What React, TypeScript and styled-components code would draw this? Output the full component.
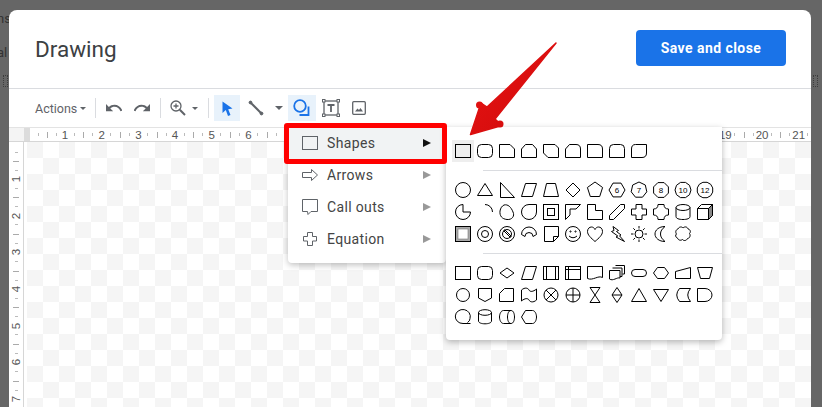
import React from "react";
import styled, { createGlobalStyle } from "styled-components";

const Global = createGlobalStyle`
  html, body { margin: 0; padding: 0; height: 407px; overflow: hidden; background: #666; }
  #root { height: 407px; }
  * { box-sizing: border-box; }
`;

const Page = styled.div`
  position: relative;
  width: 822px;
  height: 407px;
  overflow: hidden;
  background: #666;
  padding: 10px 11px 0 9px;
  font-family: Roboto, "Liberation Sans", sans-serif;
`;
const BehindText = styled.span<{ $top: number }>`
  position: absolute;
  left: -3px;
  top: ${(p) => p.$top}px;
  font-size: 13px;
  color: #333;
`;
const BehindDots = styled.span<{ $left: number }>`
  position: absolute;
  left: ${(p) => p.$left}px;
  top: 75px;
  width: 5px;
  height: 12px;
  border: 1px dotted #3d3d3d;
`;
const Dialog = styled.div`
  position: relative;
  height: 410px;
  background: #fff;
  border-radius: 8px 8px 0 0;
  overflow: hidden;
  display: flex;
  flex-direction: column;
`;
const Header = styled.header`
  height: 79px;
  flex: none;
  display: flex;
  align-items: center;
  justify-content: space-between;
  padding: 0 25px 2px 26px;
  border-bottom: 1px solid #dadce0;
`;
const Title = styled.h1`
  margin: 2px 0 0;
  font: 400 22.5px Roboto, sans-serif;
  color: #3c4043;
`;
const SaveButton = styled.button`
  width: 150px;
  height: 36px;
  border: 0;
  border-radius: 4px;
  background: #1a73e8;
  color: #fff;
  font: 700 14px Roboto, sans-serif;
  letter-spacing: 0.45px;
`;
const Toolbar = styled.div`
  height: 38px;
  flex: none;
  display: flex;
  align-items: center;
  padding-left: 26px;
`;
const ActionsLabel = styled.span`
  font-size: 12.5px;
  width: 41px;
  color: #5f6368;
  white-space: nowrap;
`;
const Divider = styled.span<{ $ml: number }>`
  width: 1px;
  height: 20px;
  flex: none;
  margin-left: ${(p) => p.$ml}px;
  background: #dadce0;
`;
const Slot = styled.span<{ $w: number; $ml?: number; $on?: boolean }>`
  width: ${(p) => p.$w}px;
  height: 26px;
  flex: none;
  margin-left: ${(p) => p.$ml ?? 0}px;
  display: flex;
  align-items: center;
  justify-content: center;
  background: ${(p) => (p.$on ? "#e8f2fb" : "transparent")};
`;
const Caret = styled.span<{ $ml?: number; $size?: number }>`
  flex: none;
  width: 0;
  height: 0;
  margin-left: ${(p) => p.$ml ?? 0}px;
  border-style: solid;
  border-color: #5f6368 transparent transparent;
  border-width: ${(p) => p.$size ?? 3}px ${(p) => p.$size ?? 3}px 0;
`;

const TopRuler = styled.div`
  height: 15px;
  flex: none;
  display: flex;
  overflow: hidden;
  border-top: 1px solid #e3e3e3;
  border-bottom: 1px solid #d6d6d6;
  background: #fff;
`;
const RulerCorner = styled.div`
  width: 21px;
  flex: none;
  background: linear-gradient(90deg, #f4f4f4 0 15px, #dcdcdc 15px);
`;
const InchCell = styled.span<{ $w?: number }>`
  flex: none;
  width: ${(p) => p.$w ?? 36.7}px;
  display: flex;
  align-items: center;
  justify-content: center;
  font: 11.5px "Liberation Sans", sans-serif;
  color: #555;
  background:
    linear-gradient(#aaa, #aaa) 0 center / 1px 6px no-repeat,
    linear-gradient(#bbb, #bbb) 9px center / 1px 3px no-repeat,
    linear-gradient(#bbb, #bbb) 27px center / 1px 3px no-repeat;
`;
const FirstCell = styled.span`
  flex: none;
  width: 16.65px;
  background: linear-gradient(#bbb, #bbb) 8px center / 1px 3px no-repeat;
`;
const WorkArea = styled.div`
  flex: 1;
  min-height: 0;
  display: flex;
`;
const LeftRuler = styled.div`
  width: 15px;
  flex: none;
  border-right: 1px solid #d6d6d6;
  display: flex;
  flex-direction: column;
  overflow: hidden;
`;
const VFirstCell = styled.span`
  flex: none;
  height: 18.65px;
  background: linear-gradient(#bbb, #bbb) center 10px / 3px 1px no-repeat;
`;
const VInchCell = styled.span`
  flex: none;
  height: 36.7px;
  display: flex;
  align-items: center;
  justify-content: center;
  font: 11.5px "Liberation Sans", sans-serif;
  color: #555;
  background:
    linear-gradient(#aaa, #aaa) center 0 / 6px 1px no-repeat,
    linear-gradient(#bbb, #bbb) center 9px / 3px 1px no-repeat,
    linear-gradient(#bbb, #bbb) center 27px / 3px 1px no-repeat;
`;
const VDigit = styled.span`
  display: block;
  transform: rotate(-90deg);
`;
const Canvas = styled.div`
  flex: 1;
  padding-left: 3px;
  background-image: conic-gradient(#fff 25%, #f5f5f5 0 50%, #fff 0 75%, #f5f5f5 0);
  background-size: 32px 32px;
  background-clip: content-box;
  background-origin: content-box;
`;

const Menu = styled.div`
  position: absolute;
  left: 279px;
  top: 117px;
  width: 158px;
  height: 136px;
  background: #fff;
  box-shadow: 0 2px 6px rgba(0, 0, 0, 0.25);
  border-radius: 0 0 4px 4px;
  z-index: 2;
`;
const MenuItem = styled.div<{ $active?: boolean }>`
  height: 32px;
  display: flex;
  align-items: center;
  padding: 0 15px 0 14px;
  gap: 9px;
  font-size: 14px;
  letter-spacing: 0.35px;
  color: #444;
  background: ${(p) => (p.$active ? "#f1f3f4" : "transparent")};
`;
const MenuLabel = styled.span`
  flex: 1;
`;
const SubArrow = styled.span<{ $active?: boolean }>`
  width: 0;
  height: 0;
  border-style: solid;
  border-width: 4px 0 4px 8px;
  border-color: transparent transparent transparent ${(p) => (p.$active ? "#111" : "#999")};
`;
const Highlight = styled.div`
  position: absolute;
  left: 275px;
  top: 113px;
  width: 163px;
  height: 41px;
  border: 5px solid #f00;
  border-radius: 3px;
  z-index: 3;
`;
const SubMenu = styled.div`
  position: absolute;
  left: 437px;
  top: 117px;
  width: 276px;
  height: 213px;
  padding: 13px 0 0 6px;
  background: #fff;
  box-shadow: 0 2px 6px rgba(0, 0, 0, 0.28);
  border-radius: 0 0 4px 4px;
  z-index: 2;
`;
const ShapeGrid = styled.div`
  display: grid;
  grid-template-columns: repeat(12, 22px);
  grid-auto-rows: 22px;
`;
const ShapeCell = styled.span<{ $on?: boolean }>`
  display: block;
  width: 22px;
  height: 22px;
  background: ${(p) => (p.$on ? "#eeeeee" : "transparent")};
`;
const ShapeRule = styled.hr`
  height: 1px;
  border: 0;
  margin: 8px 0 8px 31px;
  background: #dadce0;
`;
const CalloutArrow = styled.svg`
  position: absolute;
  left: 460px;
  top: 35px;
  z-index: 4;
`;

const poly = (n: number, r = 8, rot = 0, cx = 11, cy = 11) =>
  Array.from({ length: n }, (_, i) => {
    const a = rot + (i * 2 * Math.PI) / n;
    return `${(cx + r * Math.cos(a)).toFixed(1)},${(cy + r * Math.sin(a)).toFixed(1)}`;
  }).join(" ");

const Num = ({ t }: { t: string }) => (
  <text x="11" y="13.8" textAnchor="middle" fontSize="8" fontFamily="Liberation Sans" fill="#000" stroke="none">
    {t}
  </text>
);

const sunRays = Array.from({ length: 8 }, (_, i) => {
  const a = (i * Math.PI) / 4;
  const p = (r: number) => `${(11 + r * Math.cos(a)).toFixed(1)} ${(11 + r * Math.sin(a)).toFixed(1)}`;
  return `M${p(5.5)}L${p(8)}`;
}).join("");

const row1 = [
  <rect x="3.5" y="4.5" width="15" height="13" />,
  <rect x="3.5" y="4.5" width="15" height="13" rx="4" />,
  <path d="M3.5 4.5H14L18.5 9V17.5H3.5Z" />,
  <path d="M7.5 4.5H14.5L18.5 9V17.5H3.5V9Z" />,
  <path d="M3.5 4.5H15L18.5 8V17.5H8L3.5 13Z" />,
  <path d="M7.5 4.5H14Q18.5 4.5 18.5 9V17.5H3.5V9Z" />,
  <path d="M3.5 4.5H14Q18.5 4.5 18.5 9V17.5H3.5Z" />,
  <path d="M7.5 4.5H14.5Q18.5 4.5 18.5 8.5V17.5H3.5V8.5Q3.5 4.5 7.5 4.5Z" />,
  <path d="M7.5 4.5H18.5V13Q18.5 17.5 14 17.5H3.5V9Q3.5 4.5 7.5 4.5Z" />,
];

const row2 = [
  <circle cx="11" cy="11" r="7.5" />,
  <path d="M11 4.5L18.5 16.5H3.5Z" />,
  <path d="M4.5 3.5L18.5 18.5H4.5Z" />,
  <path d="M7.5 4.5H18.5L14.5 17.5H3.5Z" />,
  <path d="M6.5 4.5H15.5L18.5 17.5H3.5Z" />,
  <path d="M11 4L18 11L11 18L4 11Z" />,
  <polygon points={poly(5, 8, -Math.PI / 2)} />,
  <g><polygon points={poly(6, 8)} /><Num t="6" /></g>,
  <g><polygon points={poly(7, 8, -Math.PI / 2)} /><Num t="7" /></g>,
  <g><polygon points={poly(8, 8, Math.PI / 8)} /><Num t="8" /></g>,
  <g><polygon points={poly(10, 8)} /><Num t="10" /></g>,
  <g><polygon points={poly(12, 8, Math.PI / 12)} /><Num t="12" /></g>,
];

const row3 = [
  <path d="M11 11V3.5A7.5 7.5 0 1 0 18.5 11Z" />,
  <path d="M11 3.5A7.5 7.5 0 0 1 18.5 11" />,
  <path d="M8 4C12 3 15 6 17 11C19 15 16 19 11 18.5C6 18 3.5 15 4 10C4.5 7 6 5 8 4Z" />,
  <path d="M11 3.5H18.5V11A7.5 7.5 0 1 1 11 3.5Z" />,
  <g><rect x="3.5" y="3.5" width="15" height="15" /><rect x="7.5" y="7.5" width="7" height="7" /></g>,
  <path d="M3.5 3.5H18.5L14 8H8V14L3.5 18.5Z" />,
  <path d="M3.5 3.5H11.5V9.5H18.5V18.5H3.5Z" />,
  <path d="M14.5 3.5H18.5V7.5L7.5 18.5H3.5V14.5Z" />,
  <path d="M8 3.5H14V8H18.5V14H14V18.5H8V14H3.5V8H8Z" />,
  <path d="M8 3.5H14Q14 8 18.5 8V14Q14 14 14 18.5H8Q8 14 3.5 14V8Q8 8 8 3.5Z" />,
  <g><ellipse cx="11" cy="6.5" rx="7" ry="3" /><path d="M4 6.5V15.5C4 17.5 7 18.5 11 18.5S18 17.5 18 15.5V6.5" /></g>,
  <g><path d="M7.5 3.5H18.5V14.5L14.5 18.5H3.5V7.5Z" /><path d="M14.5 7.5V18.5L18.5 14.5V3.5Z" fill="#888" /><path d="M3.5 7.5H14.5L18.5 3.5" /></g>,
];

const row4 = [
  <g><rect x="3.5" y="3.5" width="15" height="15" fill="#aaa" /><rect x="6" y="6" width="10" height="10" fill="#fff" stroke="#777" strokeWidth=".6" /></g>,
  <g><circle cx="11" cy="11" r="7.5" /><circle cx="11" cy="11" r="3.5" /></g>,
  <g><circle cx="11" cy="11" r="7.5" /><circle cx="11" cy="11" r="4.5" /><path d="M7.5 7.5L14.5 14.5M8.5 6.5L15.5 13.5" /></g>,
  <path d="M3.5 11.5A7.5 7.5 0 0 1 18.5 11.5L15 13.5A4 4 0 0 0 7 13.5Z" />,
  <path d="M4.5 3.5H18.5V13.5L13.5 18.5H4.5ZM18.5 13.5H13.5V18.5" />,
  <g><circle cx="11" cy="11" r="7.5" /><path d="M7 13Q11 16.5 15 13" /><circle cx="8.5" cy="8.5" r=".6" /><circle cx="13.5" cy="8.5" r=".6" /></g>,
  <path d="M11 18.5C7 15 3.5 12 3.5 8.5C3.5 5.5 5.5 4 7.5 4C9 4 10.3 5 11 6.5C11.7 5 13 4 14.5 4C16.5 4 18.5 5.5 18.5 8.5C18.5 12 15 15 11 18.5Z" />,
  <path d="M7 3.5L12.5 7.5L10.5 8.5L15 12L13.5 12.8L18.5 18.5L10 14L11.8 13L5.5 8.5L8 7.5Z" />,
  <g><circle cx="11" cy="11" r="4" /><path d={sunRays} /></g>,
  <path d="M15 3.5C9 3.5 5 7 5 11S9 18.5 15 18.5C12 16 10.5 14 10.5 11S12 6 15 3.5Z" />,
  <path d="M6 6C7 3.5 10 3.5 11 5C13 3 15.5 4 16 6C18.5 6.5 19 9 17.5 10.5C19 12.5 17.5 15.5 15.5 15.5C14.5 18 11.5 18 10.5 16.5C8.5 18 6 17 5.5 15C3.5 14.5 3 12 4.5 11C3 9 4 6.5 6 6Z" />,
];

const flow1 = [
  <rect x="3.5" y="4.5" width="15" height="13" />,
  <rect x="3.5" y="4.5" width="15" height="13" rx="4" />,
  <path d="M11 6L18 11L11 16L4 11Z" />,
  <path d="M7.5 4.5H18.5L14.5 17.5H3.5Z" />,
  <g><rect x="3.5" y="4.5" width="15" height="13" /><path d="M6.5 4.5V17.5M15.5 4.5V17.5" /></g>,
  <g><rect x="3.5" y="4.5" width="15" height="13" /><path d="M6.5 4.5V17.5M3.5 7.5H18.5" /></g>,
  <path d="M3.5 4.5H18.5V15.5C14 13 9 19 3.5 16.5Z" />,
  <g><path d="M9.5 3.5H18.5V12H16.5" /><path d="M6.5 6H16V14.500H14" /><path d="M3.5 8.5H14V16C11 15 7 19.5 3.5 17Z" fill="#fff" /></g>,
  <rect x="3.5" y="7.5" width="15" height="7" rx="3.5" />,
  <path d="M7.5 5.5H14.5L18.5 11L14.5 16.5H7.5L3.5 11Z" />,
  <path d="M3.5 9.5L18.5 5.5V16.5H3.5Z" />,
  <path d="M3.5 5.5H18.5L15.5 16.5H6.5Z" />,
];

const flow2 = [
  <circle cx="11" cy="11" r="6.5" />,
  <path d="M4.5 4.5H17.5V14L11 17.5L4.5 14Z" />,
  <path d="M8.5 4.5H17.5V17.5H3.5V9.5Z" />,
  <path d="M3.5 6C7 3 10 4 11 6S15 8 18.5 5V16C15 19 12 18 11 16S7 14 3.5 17Z" />,
  <g><circle cx="11" cy="11" r="7" /><path d="M6 6L16 16M16 6L6 16" /></g>,
  <g><circle cx="11" cy="11" r="7" /><path d="M4 11H18M11 4V18" /></g>,
  <path d="M6 3.5H16L6 18.5H16Z" />,
  <path d="M11 3.5L16 11L11 18.5L6 11ZM6 11H16" />,
  <path d="M11 4.5L18.5 17.5H3.5Z" />,
  <path d="M3.5 5.5H18.5L11 17.5Z" />,
  <path d="M7.5 4.5H18.5Q13 11 18.5 17.5H7.5Q2 11 7.5 4.5Z" />,
  <path d="M3.5 4.5H11A7 6.5 0 0 1 11 17.5H3.5Z" />,
];

const flow3 = [
  <path d="M18.5 17.5H11A7.5 7 0 1 1 18 12.5Q18 15 15.5 16.5" />,
  <g><ellipse cx="11" cy="6.5" rx="6.5" ry="2.8" /><path d="M4.5 6.5V15C4.5 16.800 7.5 17.800 11 17.800S17.5 16.800 17.5 15V6.5" /></g>,
  <g><path d="M7.5 4.5H15C17.5 4.5 18.5 8 18.5 11S17.5 17.5 15 17.5H7.5C5 17.5 3.5 14 3.5 11S5 4.5 7.5 4.5Z" /><path d="M15 4.5C12.5 4.5 11.5 8 11.5 11S12.5 17.5 15 17.5" /></g>,
  <path d="M7.5 4.5H14.5C17 4.5 18.5 8 18.5 11S17 17.5 14.5 17.5H7.5L3.5 11Z" />,
];

const Shape = ({ s, on }: { s: React.ReactNode; on?: boolean }) => (
  <ShapeCell $on={on}>
    <svg width="22" height="22" viewBox="0 0 22 22" fill="none" stroke="#000" strokeWidth="1">
      {s}
    </svg>
  </ShapeCell>
);
const Shapes = ({ list, firstOn }: { list: React.ReactNode[]; firstOn?: boolean }) => (
  <ShapeGrid>
    {list.map((s, i) => (
      <Shape key={i} s={s} on={firstOn && i === 0} />
    ))}
  </ShapeGrid>
);

const gray = { fill: "none", stroke: "#5f6368", strokeWidth: 1 };

const App = () => (
  <>
    <Global />
    <Page>
      <BehindText $top={11}>ns</BehindText>
      <BehindText $top={45}>al</BehindText>
      <BehindDots $left={3} />
      <BehindDots $left={813} />
      <Dialog>
        <Header>
          <Title>Drawing</Title>
          <SaveButton>Save and close</SaveButton>
        </Header>
        <Toolbar>
          <ActionsLabel>Actions</ActionsLabel>
          <Caret $ml={4} />
          <Divider $ml={9} />
          <Slot $w={28} $ml={4}>
            <svg width="16" height="9" viewBox="2 7 20 11" fill="#5f6368" preserveAspectRatio="none">
              <path d="M12.5 8c-2.65 0-5.05.99-6.9 2.6L2 7v9h9l-3.62-3.62c1.39-1.16 3.16-1.88 5.12-1.88 3.54 0 6.55 2.31 7.6 5.5l2.37-.78C21.08 11.03 17.15 8 12.5 8z" />
            </svg>
          </Slot>
          <Slot $w={28}>
            <svg width="16" height="9" viewBox="2 7 20 11" fill="#5f6368" preserveAspectRatio="none">
              <path d="M18.4 10.6C16.55 8.99 14.15 8 11.5 8c-4.65 0-8.58 3.03-9.96 7.22L3.9 16c1.05-3.19 4.05-5.5 7.6-5.5 1.95 0 3.73.72 5.12 1.88L13 16h9V7l-3.6 3.6z" />
            </svg>
          </Slot>
          <Divider $ml={4} />
          <Slot $w={22} $ml={6}>
            <svg width="16" height="16" viewBox="0 0 16 16" fill="none" stroke="#5f6368" strokeWidth="1.3">
              <circle cx="6" cy="6" r="5" />
              <path d="M6 3.5V8.5M3.5 6H8.5" />
              <path d="M9.8 9.8L15 15" strokeWidth="2" />
            </svg>
          </Slot>
          <Slot $w={10} $ml={1}>
            <Caret />
          </Slot>
          <Divider $ml={8} />
          <Slot $w={26} $ml={5} $on>
            <svg width="11" height="15" viewBox="0 0 11 15" fill="#1a73e8">
              <path d="M0.5 0.5L10.5 7.5L6.2 8.3L8.5 14L6 15L3.8 9L0.5 12Z" />
            </svg>
          </Slot>
          <Slot $w={28} $ml={2}>
            <svg width="16" height="16" viewBox="0 0 16 16" fill="#5f6368" stroke="#5f6368">
              <path d="M3 3L13 13" strokeWidth="2" />
              <circle cx="2.5" cy="2.5" r="1.4" />
              <circle cx="13.5" cy="13.5" r="1.4" />
            </svg>
          </Slot>
          <Slot $w={10} $ml={4}>
            <Caret $size={4} />
          </Slot>
          <Slot $w={28} $ml={4} $on>
            <svg width="18" height="18" viewBox="0 0 18 18" fill="none" stroke="#1a73e8" strokeWidth="1.8">
              <circle cx="7" cy="7" r="5.8" />
              <path d="M15.5 7.5V16H6.5" />
            </svg>
          </Slot>
          <Slot $w={28} $ml={1}>
            <svg width="18" height="18" viewBox="0 0 18 18" fill="none" stroke="#5f6368">
              <rect x="2" y="2" width="14" height="14" strokeWidth="1.3" />
              <g fill="#fff" strokeWidth="1">
                <rect x=".5" y=".5" width="2.5" height="2.5" />
                <rect x="15" y=".5" width="2.5" height="2.5" />
                <rect x=".5" y="15" width="2.5" height="2.5" />
                <rect x="15" y="15" width="2.5" height="2.5" />
              </g>
              <path d="M5.5 6H12.5M9 6V13" strokeWidth="1.8" />
            </svg>
          </Slot>
          <Slot $w={28}>
            <svg width="14" height="14" viewBox="0 0 14 14" fill="none">
              <rect x=".7" y=".7" width="12.6" height="12.6" rx="1" stroke="#5f6368" strokeWidth="1.3" />
              <path d="M3 10.5L5.5 7.5L7 9L8.5 7L11 10.5Z" fill="#5f6368" />
            </svg>
          </Slot>
        </Toolbar>
        <TopRuler>
          <RulerCorner />
          <FirstCell />
          {Array.from({ length: 21 }, (_, i) => (
            <InchCell key={i}>{i + 1 <= 6 || i + 1 >= 19 ? i + 1 : ""}</InchCell>
          ))}
        </TopRuler>
        <WorkArea>
          <LeftRuler>
            <VFirstCell />
            {[1, 2, 3, 4, 5, 6, 7].map((n) => (
              <VInchCell key={n}>
                <VDigit>{n}</VDigit>
              </VInchCell>
            ))}
          </LeftRuler>
          <Canvas />
        </WorkArea>
        <Menu>
          <MenuItem $active>
            <svg width="16" height="16" viewBox="0 0 16 16" {...gray}>
              <rect x=".5" y="1.5" width="15" height="13" />
            </svg>
            <MenuLabel>Shapes</MenuLabel>
            <SubArrow $active />
          </MenuItem>
          <MenuItem>
            <svg width="16" height="16" viewBox="0 0 16 16" {...gray}>
              <path d="M.5 5.5H9.5V2.5L15.5 8L9.5 13.5V10.5H.5Z" />
            </svg>
            <MenuLabel>Arrows</MenuLabel>
            <SubArrow />
          </MenuItem>
          <MenuItem>
            <svg width="16" height="16" viewBox="0 0 16 16" {...gray}>
              <path d="M.5 .5H15.5V12.5H9L6 15.5L5.5 12.5H.5Z" />
            </svg>
            <MenuLabel>Call outs</MenuLabel>
            <SubArrow />
          </MenuItem>
          <MenuItem>
            <svg width="16" height="16" viewBox="0 0 16 16" {...gray}>
              <path d="M5.5 1.5H10.5V5.5H14.5V10H10.5V14.5H5.5V10H1.5V5.5H5.5Z" />
            </svg>
            <MenuLabel>Equation</MenuLabel>
            <SubArrow />
          </MenuItem>
        </Menu>
        <SubMenu>
          <Shapes list={row1} firstOn />
          <ShapeRule />
          <Shapes list={[...row2, ...row3, ...row4]} />
          <ShapeRule />
          <Shapes list={[...flow1, ...flow2, ...flow3]} />
        </SubMenu>
        <Highlight />
      </Dialog>
      <CalloutArrow width="100" height="105" viewBox="460 35 100 105">
        <defs>
          <linearGradient id="arrowFill" x1="0" y1="0" x2="1" y2="1">
            <stop offset="0" stopColor="#e81414" />
            <stop offset="1" stopColor="#cf0a0a" />
          </linearGradient>
        </defs>
        <path
          d="M556 43L487 107L481 103L470.5 134.5L502 125.5L495 119Z"
          fill="url(#arrowFill)"
          stroke="url(#arrowFill)"
          strokeWidth="1.5"
          strokeLinejoin="round"
        />
        <circle cx="479.5" cy="105" r="3.5" fill="#e01010" />
        <circle cx="500" cy="124" r="3.5" fill="#d80e0e" />
      </CalloutArrow>
    </Page>
  </>
);

export default App;
